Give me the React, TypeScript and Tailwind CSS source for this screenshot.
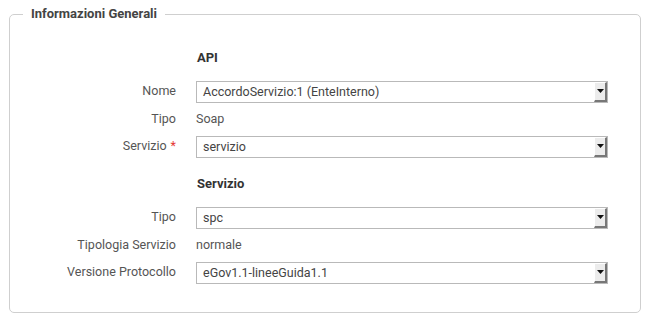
import React from "react";

function SelectBox({ value }: { value: string }) {
  return (
    <div className="flex h-[22px] w-[412px] border border-[#b9b9b9] bg-white">
      <span className="flex-1 pl-[6px] leading-[20px] text-[#444]">{value}</span>
      <span className="flex w-[13px] items-center justify-center border-t border-l border-t-white border-l-white border-r-2 border-b-2 border-r-[#777] border-b-[#777] bg-[#ececec]">
        <svg width="7" height="4" viewBox="0 0 7 4">
          <path d="M0 0h7L3.5 4z" fill="#111" />
        </svg>
      </span>
    </div>
  );
}

function Row({ label, required, tall, children }: { label: string; required?: boolean; tall?: boolean; children: React.ReactNode }) {
  return (
    <div className={tall ? "flex h-[28px] items-center" : "flex h-[27px] items-center"}>
      <div className="w-[165px] text-right text-[#555]">
        {label}
        {required && <span className="ml-[4px] text-[#e53935]">*</span>}
      </div>
      <div className="ml-[20px] text-[#555]">{children}</div>
    </div>
  );
}

export default function App() {
  return (
    <div className="h-[324px] w-[651px] bg-white pl-[9px] pt-[6px] text-[12.5px]" style={{ fontFamily: "Roboto, 'Noto Sans', sans-serif" }}>
      <fieldset className="w-[632px] rounded-[5px] border border-[#cfcfcf] pb-[26px] pl-[1px] pt-[26px]">
        <legend className="ml-[12px] px-[8px] text-[13px] font-bold leading-[16px] text-[#444]">Informazioni Generali</legend>

        <div className="mb-[10px] ml-[186px] h-[20px] text-[13px] font-bold leading-[20px] text-[#333]">API</div>
        <Row label="Nome">
          <SelectBox value="AccordoServizio:1 (EnteInterno)" />
        </Row>
        <Row label="Tipo" tall>Soap</Row>
        <Row label="Servizio" required>
          <SelectBox value="servizio" />
        </Row>

        <div className="mb-[10px] ml-[186px] mt-[14px] h-[20px] text-[13px] font-bold leading-[20px] text-[#333]">Servizio</div>
        <Row label="Tipo">
          <SelectBox value="spc" />
        </Row>
        <Row label="Tipologia Servizio" tall>normale</Row>
        <Row label="Versione Protocollo">
          <SelectBox value="eGov1.1-lineeGuida1.1" />
        </Row>
      </fieldset>
    </div>
  );
}
